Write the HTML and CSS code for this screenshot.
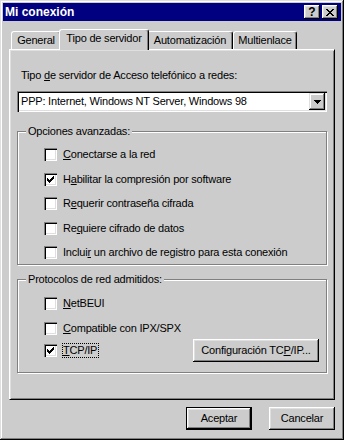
FILE: index.html
```html
<!DOCTYPE html>
<html lang="es">
<head>
<meta charset="utf-8">
<title>Mi conexión</title>
<link rel="stylesheet" href="styles.css">
</head>
<body>
<div class="window">
  <div class="titlebar">
    <span class="title">Mi conexión</span>
    <div class="title-buttons">
      <button class="tbtn tbtn-help">?</button>
      <button class="tbtn"><svg width="8" height="7" viewBox="0 0 8 7"><path d="M0 0h2v1H0zM6 0h2v1H6zM1 1h2v1H1zM5 1h2v1H5zM2 2h4v1H2zM3 3h2v1H3zM2 4h4v1H2zM1 5h2v1H1zM5 5h2v1H5zM0 6h2v1H0zM6 6h2v1H6z" fill="#000"/></svg></button>
    </div>
  </div>
  <div class="content">
    <div class="tabs">
      <div class="tab tab-general">General</div>
      <div class="tab tab-tipo active">Tipo de servidor</div>
      <div class="tab tab-auto">Automatización</div>
      <div class="tab tab-multi">Multienlace</div>
    </div>
    <div class="panel">
      <div class="field-label">Tipo <u>d</u>e servidor de Acceso telefónico a redes:</div>
      <div class="combo">
        <span class="combo-text">PPP: Internet, Windows NT Server, Windows 98</span>
        <span class="combo-btn"><svg width="7" height="4" viewBox="0 0 7 4"><path d="M0 0h7v1H6v1H5v1H4v1H3V3H2V2H1V1H0z" fill="#000"/></svg></span>
      </div>
      <fieldset class="group group-options">
        <legend>Opciones avanzadas:</legend>
        <div class="list list-options">
          <div class="row"><span class="check"></span><span class="lbl"><u>C</u>onectarse a la red</span></div>
          <div class="row"><span class="check"><svg width="7" height="7" viewBox="0 0 7 7"><path d="M6 0h1v1H6zM5 1h2v1H5zM0 2h1v1H0zM4 2h3v1H4zM0 3h2v1H0zM3 3h3v1H3zM0 4h5v1H0zM1 5h3v1H1zM2 6h1v1H2z" fill="#000"/></svg></span><span class="lbl">H<u>a</u>bilitar la compresión por software</span></div>
          <div class="row"><span class="check"></span><span class="lbl">R<u>e</u>querir contraseña cifrada</span></div>
          <div class="row"><span class="check"></span><span class="lbl">Re<u>q</u>uiere cifrado de datos</span></div>
          <div class="row"><span class="check"></span><span class="lbl">Inclui<u>r</u> un archivo de registro para esta conexión</span></div>
        </div>
      </fieldset>
      <fieldset class="group group-proto">
        <legend>Protocolos de red admitidos:</legend>
        <div class="list list-proto">
          <div class="row"><span class="check"></span><span class="lbl"><u>N</u>etBEUI</span></div>
          <div class="row"><span class="check"></span><span class="lbl"><u>C</u>ompatible con IPX/SPX</span></div>
          <div class="row row-button"><span class="check"><svg width="7" height="7" viewBox="0 0 7 7"><path d="M6 0h1v1H6zM5 1h2v1H5zM0 2h1v1H0zM4 2h3v1H4zM0 3h2v1H0zM3 3h3v1H3zM0 4h5v1H0zM1 5h3v1H1zM2 6h1v1H2z" fill="#000"/></svg></span><span class="lbl focus"><u>T</u>CP/IP</span><button class="btn btn-config">Configuración TC<u>P</u>/IP...</button></div>
        </div>
      </fieldset>
    </div>
    <div class="actions">
      <button class="btn btn-default">Aceptar</button>
      <button class="btn">Cancelar</button>
    </div>
  </div>
</div>
</body>
</html>
```
FILE: styles.css
```css
* { box-sizing: border-box; }
html, body { margin: 0; padding: 0; }
body {
  width: 344px;
  height: 440px;
  overflow: hidden;
  background: #cccccc;
  font-family: "Liberation Sans", Arial, sans-serif;
  font-size: 11px;
  letter-spacing: -0.2px;
  color: #000;
}
.window {
  width: 344px;
  height: 440px;
  padding: 3px;
  background: #cccccc;
  box-shadow: inset -1px -1px #000, inset 1px 1px #dfdfdf, inset -2px -2px #808080, inset 2px 2px #fff;
  display: flex;
  flex-direction: column;
}
.titlebar {
  height: 18px;
  flex: none;
  background: #000080;
  display: flex;
  align-items: center;
  justify-content: space-between;
  padding: 0 3px 0 2px;
}
.title {
  color: #fff;
  font-weight: bold;
  font-size: 12px;
  letter-spacing: 0;
  line-height: 18px;
}
.title-buttons { display: flex; gap: 2px; }
.tbtn {
  width: 16px;
  height: 14px;
  padding: 0;
  border: 0;
  background: #cccccc;
  box-shadow: inset -1px -1px #000, inset 1px 1px #fff, inset -2px -2px #808080, inset 2px 2px #dfdfdf;
  display: flex;
  align-items: center;
  justify-content: center;
  font-family: "Liberation Sans", Arial, sans-serif;
  font-weight: bold;
  font-size: 12px;
  line-height: 14px;
  color: #000;
}
.tbtn-help { padding-bottom: 1px; }
.content {
  flex: 1;
  padding: 0 6px;
  display: flex;
  flex-direction: column;
}
.tabs {
  display: flex;
  align-items: flex-end;
  height: 20px;
  margin-top: 8px;
  padding-left: 2px;
}
.tab {
  height: 18px;
  padding-top: 2px;
  line-height: 13px;
  text-align: center;
  white-space: nowrap;
  background: #cccccc;
  border: 1px solid #fff;
  border-bottom: 0;
  border-right-color: #000;
  border-radius: 3px 3px 0 0;
  box-shadow: inset -1px 0 #808080;
}
.tab.active {
  height: 21px;
  margin: 0 -2px -1px;
  position: relative;
  z-index: 1;
}
.tab-general { width: 50px; }
.tab-tipo { width: 86px; }
.tab-tipo.active { width: 90px; }
.tab-auto { width: 86px; }
.tab-multi { width: 64px; }
.panel {
  border: 1px solid;
  border-color: #fff #000 #000 #fff;
  box-shadow: inset 1px 1px #dfdfdf, inset -1px -1px #808080;
  padding: 19px 7px 26px 7px;
}
.field-label { margin-left: 4px; line-height: 13px; }
.combo {
  margin-top: 9px;
  height: 21px;
  padding: 2px;
  background: #fff;
  box-shadow: inset 1px 1px #808080, inset 2px 2px #000, inset -1px -1px #fff, inset -2px -2px #dfdfdf;
  display: flex;
  align-items: stretch;
}
.combo-text {
  flex: 1;
  padding-left: 2px;
  line-height: 16px;
  white-space: nowrap;
}
.combo-btn {
  width: 16px;
  flex: none;
  background: #cccccc;
  box-shadow: inset -1px -1px #000, inset 1px 1px #dfdfdf, inset -2px -2px #808080, inset 2px 2px #fff;
  display: flex;
  align-items: center;
  justify-content: center;
}
.group {
  margin: 12px 0 0;
  padding: 0 7px 5px 8px;
  min-width: 0;
  border: 1px solid #808080;
  box-shadow: inset 1px 1px #fff, 1px 1px #fff;
}
.group legend {
  padding: 0 2px;
  line-height: 14px;
  background: #cccccc;
}
.group-proto { margin-top: 7px; padding-bottom: 10px; }
.list {
  display: flex;
  flex-direction: column;
  gap: 11.5px;
  padding: 10px 0 0 18px;
}
.list-proto { padding-top: 11px; }
.row {
  display: flex;
  align-items: center;
  gap: 6px;
  height: 13px;
  line-height: 13px;
  white-space: nowrap;
}
.row-button { height: 23px; margin-top: -7px; }
.check {
  width: 13px;
  height: 13px;
  flex: none;
  background: #fff;
  box-shadow: inset 1px 1px #808080, inset 2px 2px #000, inset -1px -1px #fff, inset -2px -2px #dfdfdf;
  display: flex;
  align-items: center;
  justify-content: center;
}
.lbl.focus {
  border: 1px dotted #000;
  padding: 0 1px 0 0;
  margin-left: -1px;
  line-height: 13px;
}
.btn {
  width: 66px;
  height: 23px;
  padding: 0;
  border: 0;
  background: #cccccc;
  box-shadow: inset -1px -1px #000, inset 1px 1px #fff, inset -2px -2px #808080, inset 2px 2px #dfdfdf;
  font: inherit;
  letter-spacing: inherit;
  line-height: 21px;
  color: #000;
  text-align: center;
}
.btn-default {
  border: 1px solid #000;
  box-shadow: inset -1px -1px #000, inset 1px 1px #fff, inset -2px -2px #808080, inset 2px 2px #dfdfdf;
}
.btn-config { width: 126px; margin-left: auto; }
.actions {
  display: flex;
  justify-content: flex-end;
  gap: 17px;
  margin-top: 7px;
}
```
